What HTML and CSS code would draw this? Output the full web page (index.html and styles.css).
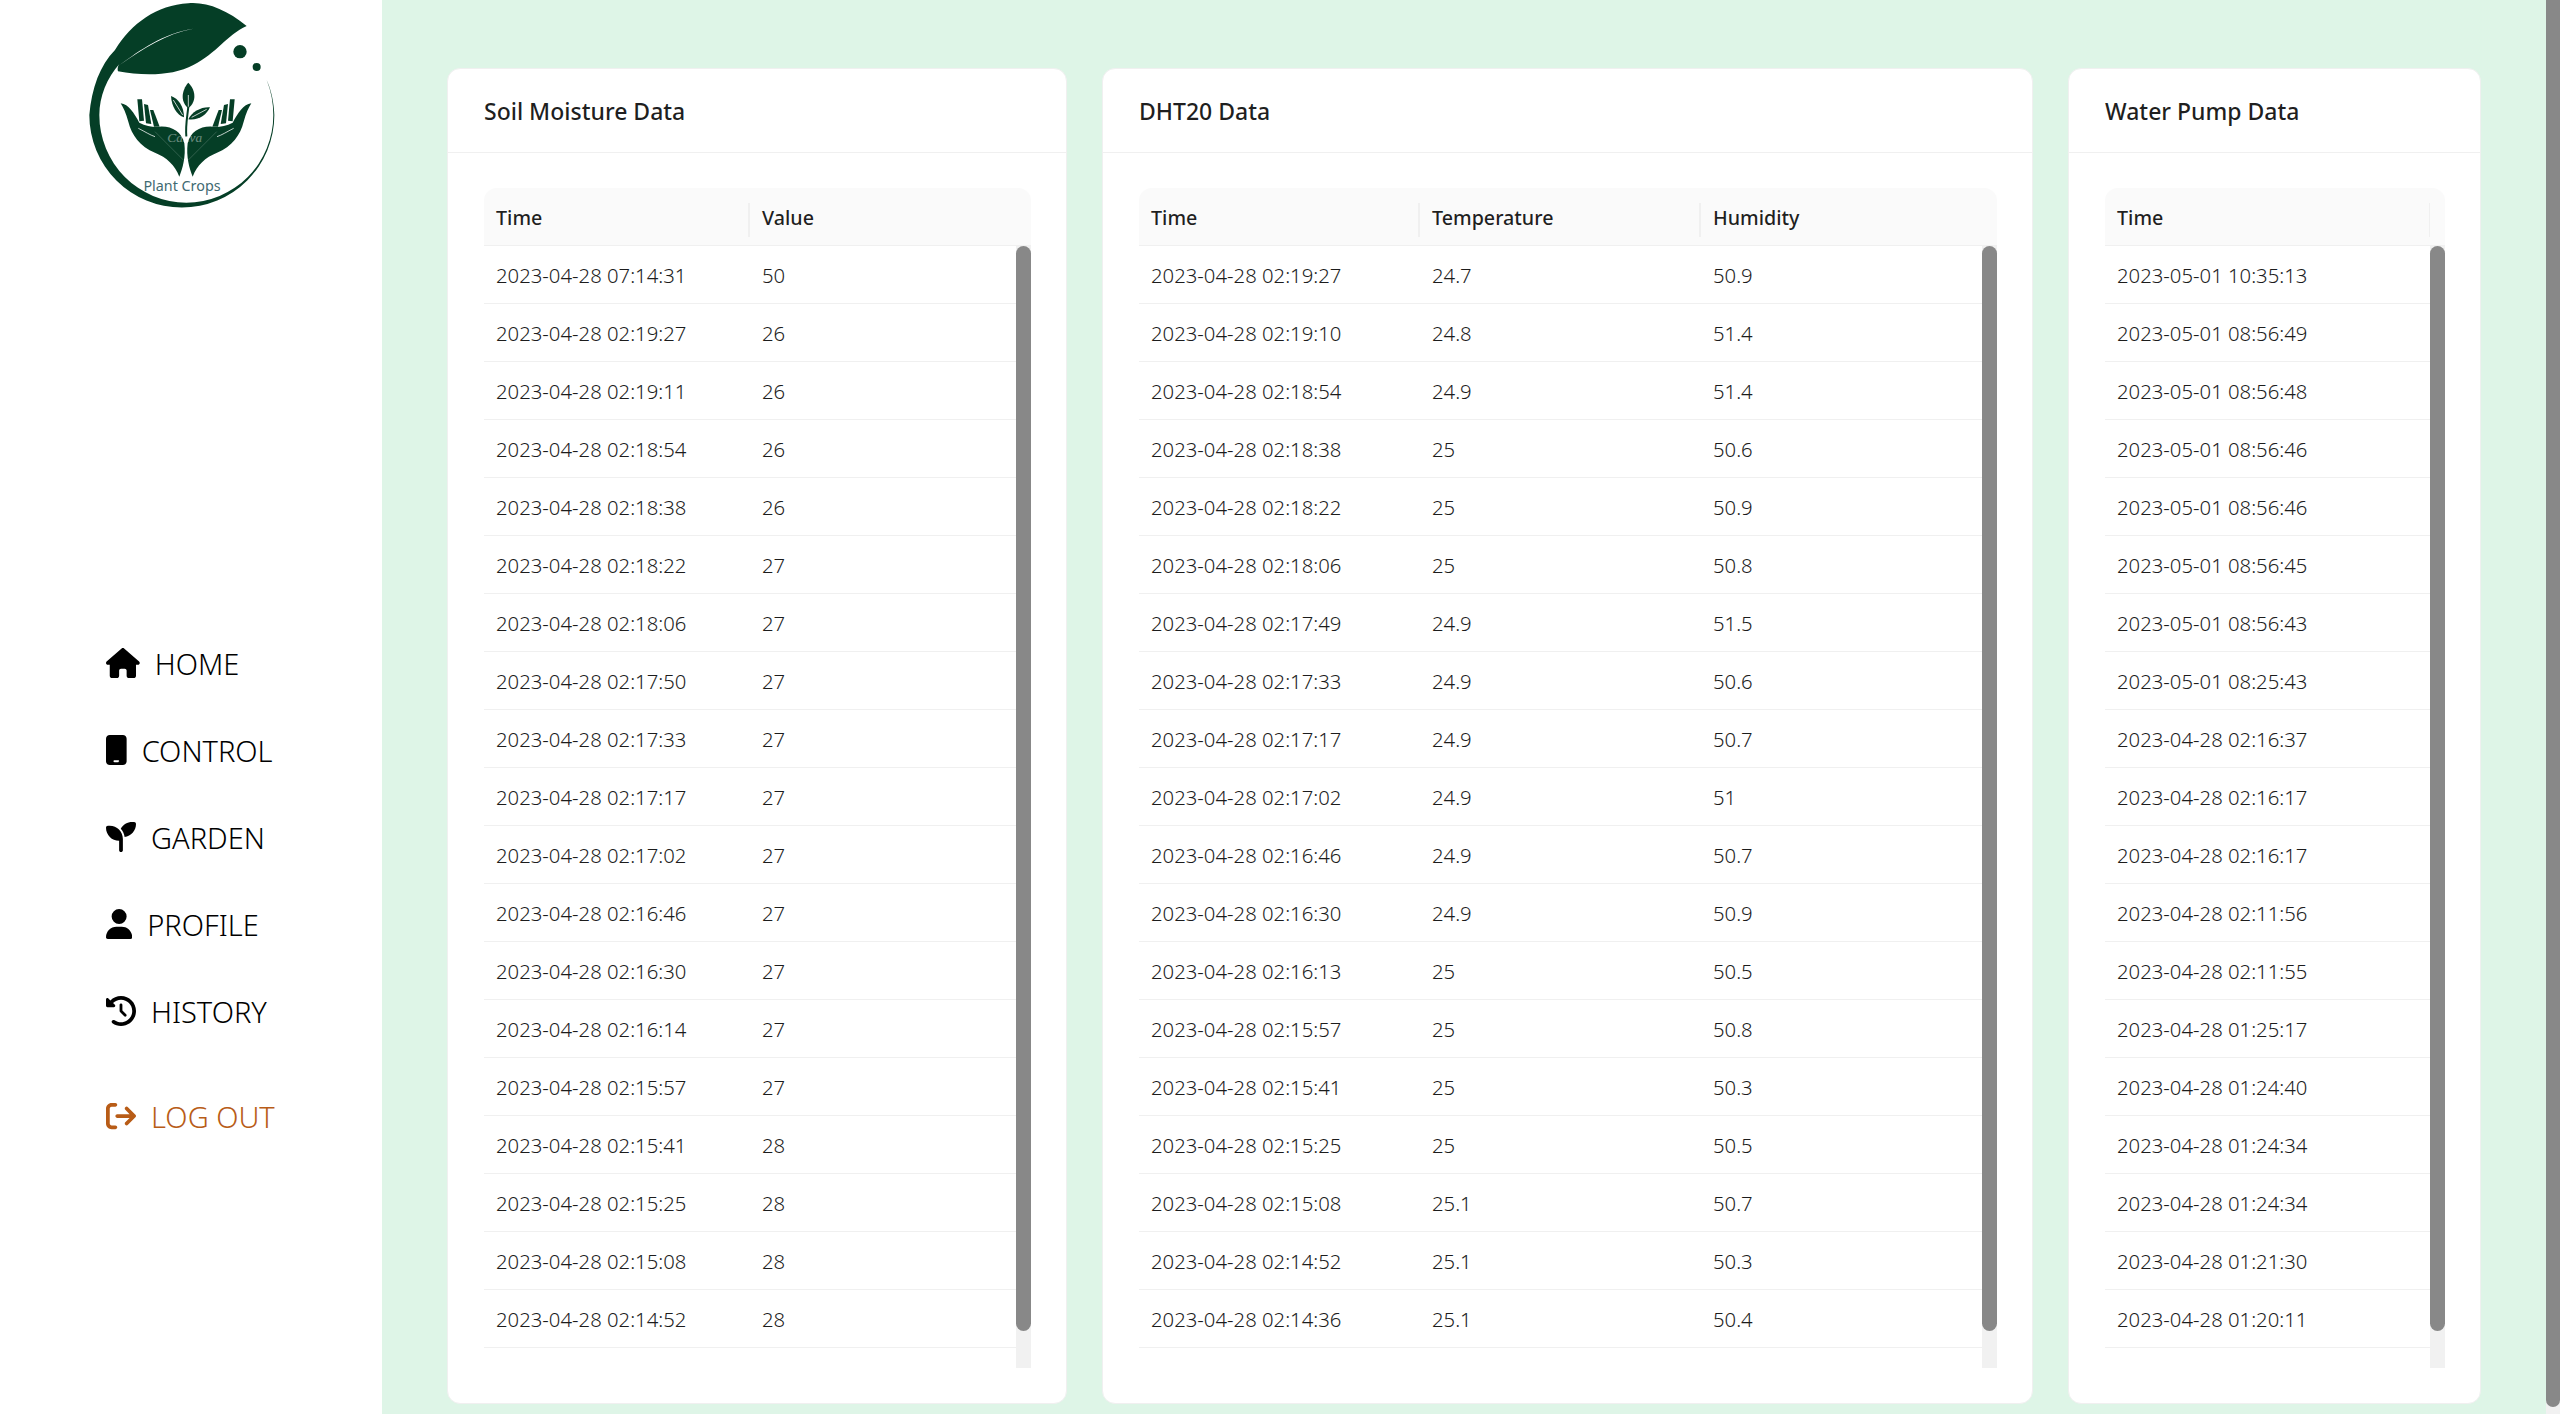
FILE: index.html
```html
<!DOCTYPE html>
<html lang="en">
<head>
<meta charset="utf-8">
<title>Plant Crops</title>
<link rel="stylesheet" href="styles.css">
</head>
<body>
<aside class="sidebar">
  <svg class="logo" viewBox="0 0 720 660" role="img" aria-label="Plant Crops">
    <g class="logo-ink">
      <path d="M560 78C500 30 440 5 385 10C290 15 215 70 165 150C120 195 95 265 88 345A277.5 277.5 0 0 0 643 345C642 310 634 270 620 240C634 275 640 310 640 345A261 263 0 0 1 118 345C118 290 140 235 180 190C172 200 172 208 174 214C250 228 340 228 400 195C470 160 500 105 560 78Z"/>
      <circle cx="540" cy="155" r="20"/>
      <circle cx="590" cy="201" r="12"/>
      <path d="M385 248C400 262 408 285 400 305C396 315 390 320 385 324C376 318 368 305 368 290C368 275 375 258 385 248Z"/>
      <path d="M333 288C355 295 372 320 372 352C350 345 335 320 333 288Z"/>
      <path d="M450 322C425 320 395 335 385 358C415 362 440 345 450 322Z"/>
      <path class="logo-stem" d="M385 320C382 350 376 375 379 410"/>
      <g id="hand">
        <path d="M182 310C206 312 222 340 238 368C260 380 285 382 300 380C335 378 365 395 373 430C378 470 368 505 358 530C345 495 320 472 285 458C240 440 215 405 205 365C198 340 190 322 182 310Z"/>
        <path d="M232 298L246 298L252 362L238 364Z"/>
        <path d="M252 312L264 315L274 372L258 370Z"/>
        <path d="M270 330L280 330L299 380L282 380Z"/>
      </g>
      <use href="#hand" transform="translate(756 0) scale(-1 1)"/>
    </g>
    <path class="logo-vein" d="M180 194C240 150 310 100 400 86C320 100 250 145 180 194Z"/>
    <path class="logo-crease" d="M235 385C255 395 270 405 285 410M521 385C501 395 486 405 471 410M385 285V320M340 300L368 345M440 328L395 352"/>
    <path class="logo-mark" d="M285 395L370 480M470 395L385 480"/>
    <text class="logo-canva" x="322" y="425">Canva</text>
    <text class="logo-name" x="366" y="574">Plant Crops</text>
  </svg>
  <nav class="nav">
    <a class="nav-item"><svg class="icon" viewBox="0 0 576 512"><path d="M575.8 255.5c0 18-15 32.1-32 32.1h-32l.7 160.2c0 2.7-.2 5.4-.5 8.1V472c0 22.1-17.9 40-40 40H456c-1.1 0-2.2 0-3.3-.1c-1.4 .1-2.8 .1-4.2 .1H416 392c-22.1 0-40-17.9-40-40V448 384c0-17.7-14.3-32-32-32H256c-17.7 0-32 14.3-32 32v64 24c0 22.1-17.9 40-40 40H160 128.1c-1.5 0-3-.1-4.5-.2c-1.2 .1-2.4 .2-3.6 .2H104c-22.1 0-40-17.9-40-40V360c0-.9 0-1.9 .1-2.8V287.6H32c-18 0-32-14-32-32.1c0-9 3-17 10-24L266.4 8c7-7 15-8 22-8s15 2 21 7L564.8 231.5c8 7 12 15 11 24z"/></svg><span>HOME</span></a>
    <a class="nav-item"><svg class="icon" viewBox="16 0 352 512"><path d="M80 0C44.7 0 16 28.7 16 64V448c0 35.3 28.7 64 64 64H304c35.3 0 64-28.7 64-64V64c0-35.3-28.7-64-64-64H80zm80 432h64c8.8 0 16 7.2 16 16s-7.2 16-16 16H160c-8.8 0-16-7.2-16-16s7.2-16 16-16z"/></svg><span>CONTROL</span></a>
    <a class="nav-item"><svg class="icon" viewBox="0 0 512 512"><path d="M512 32c0 113.6-84.6 207.5-194.2 222c-7.1-53.4-30.6-101.6-65.3-139.3C290.8 46.3 364 0 448 0h32c17.7 0 32 14.3 32 32zM0 96C0 78.3 14.3 64 32 64H64c123.7 0 224 100.3 224 224v32V480c0 17.7-14.3 32-32 32s-32-14.3-32-32V320C100.3 320 0 219.7 0 96z"/></svg><span>GARDEN</span></a>
    <a class="nav-item"><svg class="icon" viewBox="0 0 448 512"><path d="M224 256A128 128 0 1 0 224 0a128 128 0 1 0 0 256zm-45.7 48C79.8 304 0 383.8 0 482.3C0 498.7 13.3 512 29.7 512H418.3c16.4 0 29.7-13.3 29.7-29.7C448 383.8 368.2 304 269.7 304H178.3z"/></svg><span>PROFILE</span></a>
    <a class="nav-item"><svg class="icon" viewBox="0 0 512 512"><path d="M75 75L41 41C25.9 25.9 0 36.6 0 57.9V168c0 13.3 10.7 24 24 24H134.1c21.4 0 32.1-25.9 17-41l-30.8-30.8C155 85.5 203 64 256 64c106 0 192 86 192 192s-86 192-192 192c-40.8 0-78.6-12.7-109.7-34.4c-14.5-10.1-34.4-6.6-44.6 7.9s-6.6 34.4 7.9 44.6C151.2 495 201.7 512 256 512c141.4 0 256-114.6 256-256S397.4 0 256 0C185.3 0 121.3 28.7 75 75zm181 53c-13.3 0-24 10.7-24 24V256c0 6.4 2.5 12.5 7 17l72 72c9.4 9.4 24.6 9.4 33.9 0s9.4-24.6 0-33.9l-65-65V152c0-13.3-10.7-24-24-24z"/></svg><span>HISTORY</span></a>
    <a class="nav-item logout"><svg class="icon" viewBox="0 0 512 512"><path d="M502.6 278.6c12.5-12.5 12.5-32.8 0-45.3l-128-128c-12.5-12.5-32.8-12.5-45.3 0s-12.5 32.8 0 45.3L402.7 224 192 224c-17.7 0-32 14.3-32 32s14.3 32 32 32l210.7 0-73.4 73.4c-12.5 12.5-12.5 32.8 0 45.3s32.8 12.5 45.3 0l128-128zM160 96c17.7 0 32-14.3 32-32s-14.3-32-32-32L96 32C43 32 0 75 0 128L0 384c0 53 43 96 96 96l64 0c17.7 0 32-14.3 32-32s-14.3-32-32-32l-64 0c-17.7 0-32-14.3-32-32l0-256c0-17.7 14.3-32 32-32l64 0z"/></svg><span>LOG OUT</span></a>
  </nav>
</aside>

<main class="main">
  <section class="card">
    <h2 class="card-title">Soil Moisture Data</h2>
    <div class="card-body">
      <div class="table">
        <div class="row head cols-2"><div>Time</div><div>Value</div><div class="spacer"></div></div>
        <div class="table-scroll">
          <div class="rows">
            <div class="row cols-2"><div>2023-04-28 07:14:31</div><div>50</div></div>
            <div class="row cols-2"><div>2023-04-28 02:19:27</div><div>26</div></div>
            <div class="row cols-2"><div>2023-04-28 02:19:11</div><div>26</div></div>
            <div class="row cols-2"><div>2023-04-28 02:18:54</div><div>26</div></div>
            <div class="row cols-2"><div>2023-04-28 02:18:38</div><div>26</div></div>
            <div class="row cols-2"><div>2023-04-28 02:18:22</div><div>27</div></div>
            <div class="row cols-2"><div>2023-04-28 02:18:06</div><div>27</div></div>
            <div class="row cols-2"><div>2023-04-28 02:17:50</div><div>27</div></div>
            <div class="row cols-2"><div>2023-04-28 02:17:33</div><div>27</div></div>
            <div class="row cols-2"><div>2023-04-28 02:17:17</div><div>27</div></div>
            <div class="row cols-2"><div>2023-04-28 02:17:02</div><div>27</div></div>
            <div class="row cols-2"><div>2023-04-28 02:16:46</div><div>27</div></div>
            <div class="row cols-2"><div>2023-04-28 02:16:30</div><div>27</div></div>
            <div class="row cols-2"><div>2023-04-28 02:16:14</div><div>27</div></div>
            <div class="row cols-2"><div>2023-04-28 02:15:57</div><div>27</div></div>
            <div class="row cols-2"><div>2023-04-28 02:15:41</div><div>28</div></div>
            <div class="row cols-2"><div>2023-04-28 02:15:25</div><div>28</div></div>
            <div class="row cols-2"><div>2023-04-28 02:15:08</div><div>28</div></div>
            <div class="row cols-2"><div>2023-04-28 02:14:52</div><div>28</div></div>
          </div>
          <div class="scrollbar"><div class="thumb"></div></div>
        </div>
      </div>
    </div>
  </section>

  <section class="card">
    <h2 class="card-title">DHT20 Data</h2>
    <div class="card-body">
      <div class="table">
        <div class="row head cols-3"><div>Time</div><div>Temperature</div><div>Humidity</div><div class="spacer"></div></div>
        <div class="table-scroll">
          <div class="rows">
            <div class="row cols-3"><div>2023-04-28 02:19:27</div><div>24.7</div><div>50.9</div></div>
            <div class="row cols-3"><div>2023-04-28 02:19:10</div><div>24.8</div><div>51.4</div></div>
            <div class="row cols-3"><div>2023-04-28 02:18:54</div><div>24.9</div><div>51.4</div></div>
            <div class="row cols-3"><div>2023-04-28 02:18:38</div><div>25</div><div>50.6</div></div>
            <div class="row cols-3"><div>2023-04-28 02:18:22</div><div>25</div><div>50.9</div></div>
            <div class="row cols-3"><div>2023-04-28 02:18:06</div><div>25</div><div>50.8</div></div>
            <div class="row cols-3"><div>2023-04-28 02:17:49</div><div>24.9</div><div>51.5</div></div>
            <div class="row cols-3"><div>2023-04-28 02:17:33</div><div>24.9</div><div>50.6</div></div>
            <div class="row cols-3"><div>2023-04-28 02:17:17</div><div>24.9</div><div>50.7</div></div>
            <div class="row cols-3"><div>2023-04-28 02:17:02</div><div>24.9</div><div>51</div></div>
            <div class="row cols-3"><div>2023-04-28 02:16:46</div><div>24.9</div><div>50.7</div></div>
            <div class="row cols-3"><div>2023-04-28 02:16:30</div><div>24.9</div><div>50.9</div></div>
            <div class="row cols-3"><div>2023-04-28 02:16:13</div><div>25</div><div>50.5</div></div>
            <div class="row cols-3"><div>2023-04-28 02:15:57</div><div>25</div><div>50.8</div></div>
            <div class="row cols-3"><div>2023-04-28 02:15:41</div><div>25</div><div>50.3</div></div>
            <div class="row cols-3"><div>2023-04-28 02:15:25</div><div>25</div><div>50.5</div></div>
            <div class="row cols-3"><div>2023-04-28 02:15:08</div><div>25.1</div><div>50.7</div></div>
            <div class="row cols-3"><div>2023-04-28 02:14:52</div><div>25.1</div><div>50.3</div></div>
            <div class="row cols-3"><div>2023-04-28 02:14:36</div><div>25.1</div><div>50.4</div></div>
          </div>
          <div class="scrollbar"><div class="thumb"></div></div>
        </div>
      </div>
    </div>
  </section>

  <section class="card">
    <h2 class="card-title">Water Pump Data</h2>
    <div class="card-body">
      <div class="table">
        <div class="row head cols-1"><div>Time</div><div class="spacer"></div></div>
        <div class="table-scroll">
          <div class="rows">
            <div class="row cols-1"><div>2023-05-01 10:35:13</div></div>
            <div class="row cols-1"><div>2023-05-01 08:56:49</div></div>
            <div class="row cols-1"><div>2023-05-01 08:56:48</div></div>
            <div class="row cols-1"><div>2023-05-01 08:56:46</div></div>
            <div class="row cols-1"><div>2023-05-01 08:56:46</div></div>
            <div class="row cols-1"><div>2023-05-01 08:56:45</div></div>
            <div class="row cols-1"><div>2023-05-01 08:56:43</div></div>
            <div class="row cols-1"><div>2023-05-01 08:25:43</div></div>
            <div class="row cols-1"><div>2023-04-28 02:16:37</div></div>
            <div class="row cols-1"><div>2023-04-28 02:16:17</div></div>
            <div class="row cols-1"><div>2023-04-28 02:16:17</div></div>
            <div class="row cols-1"><div>2023-04-28 02:11:56</div></div>
            <div class="row cols-1"><div>2023-04-28 02:11:55</div></div>
            <div class="row cols-1"><div>2023-04-28 01:25:17</div></div>
            <div class="row cols-1"><div>2023-04-28 01:24:40</div></div>
            <div class="row cols-1"><div>2023-04-28 01:24:34</div></div>
            <div class="row cols-1"><div>2023-04-28 01:24:34</div></div>
            <div class="row cols-1"><div>2023-04-28 01:21:30</div></div>
            <div class="row cols-1"><div>2023-04-28 01:20:11</div></div>
          </div>
          <div class="scrollbar"><div class="thumb"></div></div>
        </div>
      </div>
    </div>
  </section>
</main>

<div class="page-scrollbar"><div class="page-thumb"></div></div>
</body>
</html>
```

FILE: styles.css
```css
* { box-sizing: border-box; }

html, body { height: 100%; }

body {
  margin: 0;
  height: 1414px;
  overflow: hidden;
  display: flex;
  background: #def5e7;
  font-family: "Noto Sans", "Open Sans", sans-serif;
  color: rgba(0, 0, 0, 0.88);
}

/* Sidebar */
.sidebar {
  flex: 0 0 382px;
  background: #fff;
  display: flex;
  flex-direction: column;
}

.logo {
  display: block;
  width: 240px;
  height: 220px;
  margin-left: 60px;
  flex: none;
}

.logo-ink { fill: #053e26; }
.logo-stem { fill: none; stroke: #053e26; stroke-width: 6; }
.logo-vein { fill: #fff; }
.logo-crease { fill: none; stroke: #fff; stroke-width: 3; opacity: 0.75; }
.logo-mark { fill: none; stroke: #fff; stroke-width: 1.5; opacity: 0.35; }
.logo-canva { font-family: "Liberation Serif", serif; font-style: italic; font-size: 40px; fill: #fff; opacity: 0.4; }
.logo-name { font-family: "Noto Sans", sans-serif; font-size: 43px; fill: #3f6a72; text-anchor: middle; }

.nav {
  margin-top: 422px;
  padding-left: 106px;
  display: flex;
  flex-direction: column;
  gap: 45px;
}

.nav-item {
  display: flex;
  align-items: center;
  gap: 15px;
  height: 42px;
  font-size: 29px;
  font-weight: 300;
  color: #000;
}

.icon {
  display: block;
  height: 30px;
  width: auto;
  flex: none;
  fill: currentColor;
}

.logout {
  margin-top: 18px;
  color: #b85c17;
}

/* Main */
.main {
  flex: 1;
  min-width: 0;
  padding: 68px 65px 10px;
  display: grid;
  grid-template-columns: 620fr 931fr 413fr;
  gap: 35px;
}

.card {
  background: #fff;
  border: 1px solid #f0f0f0;
  border-radius: 13px;
  display: flex;
  flex-direction: column;
  min-width: 0;
}

.card-title {
  margin: 0;
  height: 84px;
  padding: 0 36px;
  display: flex;
  align-items: center;
  border-bottom: 1px solid #f0f0f0;
  font-size: 23px;
  font-weight: 500;
}

.card-body { padding: 35px 35px 0 36px; }

/* Table */
.table { font-size: 20.3px; }

.row {
  display: grid;
  height: 58px;
  padding-top: 1px;
  align-items: center;
  border-bottom: 1px solid #f0f0f0;
  color: #1c1c1c;
  font-weight: 300;
}

.row > div { padding: 0 12px; }

.cols-1 { grid-template-columns: 1fr; }
.cols-2 { grid-template-columns: 1fr 1fr; }
.cols-3 { grid-template-columns: 1fr 1fr 1fr; }

.head {
  background: #fafafa;
  border-radius: 13px 13px 0 0;
  font-size: 19.7px;
  font-weight: 500;
  color: rgba(0, 0, 0, 0.88);
}

.head.cols-1 { grid-template-columns: 1fr 15px; }
.head.cols-2 { grid-template-columns: 1fr 1fr 15px; }
.head.cols-3 { grid-template-columns: 1fr 1fr 1fr 15px; }

.head > div { position: relative; }

.head > div:not(.spacer)::after {
  content: "";
  position: absolute;
  right: 0;
  top: -1px;
  height: 34px;
  width: 2px;
  background: #f0f0f0;
}

.head > div:nth-last-child(2)::after { width: 1px; }
.cols-3.head > div:nth-last-child(2)::after,
.cols-2.head > div:nth-last-child(2)::after { width: 0; }

.spacer { padding: 0; }

.table-scroll {
  display: flex;
  height: 1122px;
}

.rows { flex: 1; min-width: 0; }

.scrollbar {
  flex: 0 0 15px;
  background: #f1f1f1;
}

.thumb {
  height: 1085px;
  background: #888;
  border-radius: 8px;
}

/* Page scrollbar */
.page-scrollbar {
  flex: 0 0 14px;
  background: #f1f1f1;
}

.page-thumb {
  height: 1407px;
  background: #888;
  border-radius: 0 0 8px 8px;
}
```
